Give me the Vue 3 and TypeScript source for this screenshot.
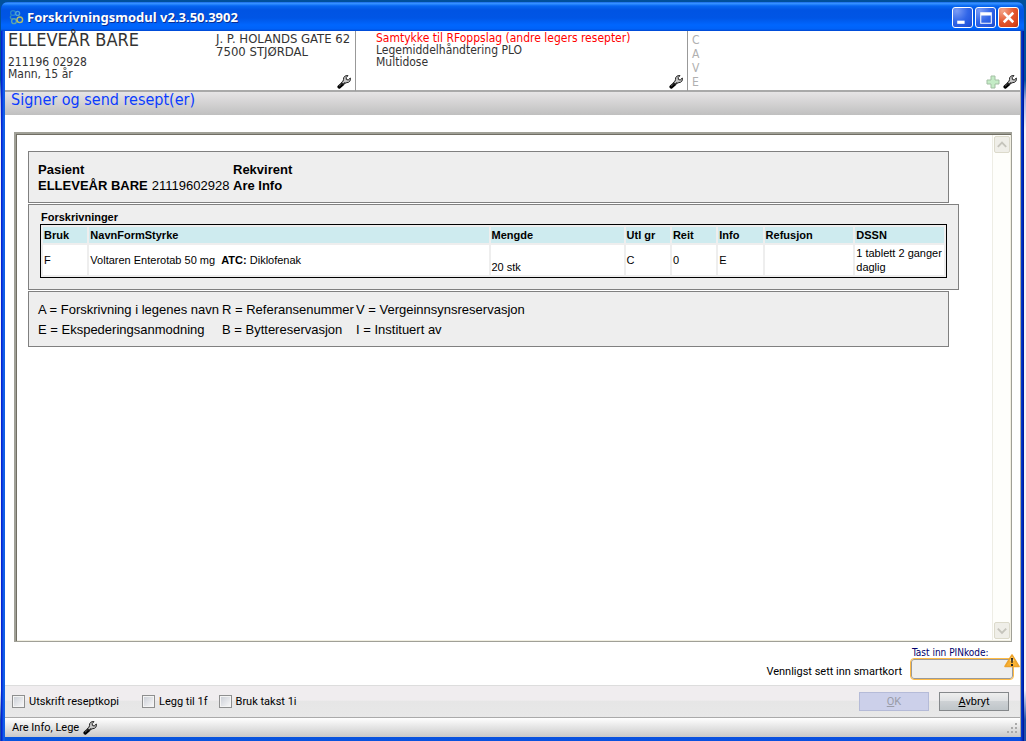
<script setup lang="ts">
import { ref } from 'vue'

interface Prescription {
  use: string
  name: string
  atc: string
  amount: string
  group: string
  repeats: string
  info: string
  refund: string
  dosage: string
}

const columns = ['Bruk', 'NavnFormStyrke', 'Mengde', 'Utl gr', 'Reit', 'Info', 'Refusjon', 'DSSN']

const prescriptions: Prescription[] = [
  {
    use: 'F',
    name: 'Voltaren Enterotab 50 mg',
    atc: 'Diklofenak',
    amount: '20 stk',
    group: 'C',
    repeats: '0',
    info: 'E',
    refund: '',
    dosage: '1 tablett 2 ganger daglig',
  },
]

const legend = [
  ['A = Forskrivning i legenes navn', 'R = Referansenummer', 'V = Vergeinnsynsreservasjon'],
  ['E = Ekspederingsanmodning', 'B = Byttereservasjon', 'I = Instituert av'],
]

const cave = ['C', 'A', 'V', 'E']

const printCopy = ref(false)
const add1f = ref(false)
const useRate1i = ref(false)
const pin = ref('')
</script>

<template>
  <div class="desktop">
    <svg class="defs" width="0" height="0" aria-hidden="true">
      <symbol id="wrench" viewBox="0 0 14 14">
        <path d="M2.2 11.8 5.6 8.8" stroke="#000" stroke-width="3.6" stroke-linecap="round" />
        <path d="M5 9 9 5.2" stroke="#222" stroke-width="3.4" />
        <path d="M11 .6C8.2.2 6.2 1.9 6.5 4.4L6 6.2 8 8.2 9.9 7.6C12.3 7.7 13.9 5.7 13.3 3L11.2 5 9.4 4.4 9.2 2.6Z" fill="#c4c4c4" stroke="#222" stroke-width="1" />
        <path d="M5.6 8 8.6 5.2" stroke="#ccc" stroke-width="1.4" />
        <path d="M2 11.2 4.6 9" stroke="#777" stroke-width="0.8" />
      </symbol>
    </svg>

    <div class="window">
      <header class="titlebar">
        <svg class="app-icon" viewBox="0 0 16 16" fill="none" stroke-width="1.4" aria-hidden="true">
          <circle cx="5" cy="4" r="2.4" stroke="#2a86c8" />
          <circle cx="9.6" cy="4.4" r="2" stroke="#4aa0d8" />
          <path d="M3 6.6C1.4 8.6 3 10.4 5 10" stroke="#3c90b8" />
          <circle cx="6" cy="12.2" r="2.4" stroke="#5aa3ae" />
          <circle cx="11.8" cy="10.8" r="2.8" stroke="#b0bf6b" />
        </svg>
        <h1>Forskrivningsmodul v2.3.50.3902</h1>
        <div class="window-buttons">
          <button type="button" aria-label="Minimer">
            <svg viewBox="0 0 18 18"><rect x="4" y="12" width="7" height="3" fill="#fff" /></svg>
          </button>
          <button type="button" aria-label="Maksimer">
            <svg viewBox="0 0 18 18"><path d="M4 4h11v11H4zM5 7v7h9V7z" fill="#fff" fill-rule="evenodd" /></svg>
          </button>
          <button type="button" class="close" aria-label="Lukk">
            <svg viewBox="0 0 18 18"><path d="M4.5 4.5 13.5 13.5M13.5 4.5 4.5 13.5" stroke="#fff" stroke-width="2.4" /></svg>
          </button>
        </div>
      </header>

      <div class="client">
        <section class="summary">
          <div class="cell patient">
            <div class="identity">
              <h2>ELLEVEÅR BARE</h2>
              <p>211196 02928</p>
              <p>Mann, 15 år</p>
            </div>
            <address>J. P. HOLANDS GATE 62<br />7500 STJØRDAL</address>
            <button type="button" class="tool" aria-label="Rediger pasient"><svg><use href="#wrench" /></svg></button>
          </div>
          <div class="cell consent">
            <div>
              <p class="alert">Samtykke til RFoppslag (andre legers resepter)</p>
              <p>Legemiddelhåndtering PLO</p>
              <p>Multidose</p>
            </div>
            <button type="button" class="tool" aria-label="Rediger samtykke"><svg><use href="#wrench" /></svg></button>
          </div>
          <div class="cell cave">
            <div class="cave-letters"><span v-for="letter in cave" :key="letter">{{ letter }}</span></div>
            <button type="button" class="tool" aria-label="Legg til CAVE">
              <svg viewBox="0 0 14 14"><path d="M5 1h4v4h4v4H9v4H5V9H1V5h4z" fill="#c4ecc6" stroke="#a3bfa3" /></svg>
            </button>
            <button type="button" class="tool" aria-label="Rediger CAVE"><svg><use href="#wrench" /></svg></button>
          </div>
        </section>

        <h2 class="heading">Signer og send resept(er)</h2>

        <main class="work">
          <div class="viewer">
            <div class="document">
              <section class="box people">
                <div class="person">
                  <b>Pasient</b>
                  <div class="person-line"><b>ELLEVEÅR BARE</b><span>21119602928</span></div>
                </div>
                <div class="person">
                  <b>Rekvirent</b>
                  <b>Are Info</b>
                </div>
              </section>

              <section class="box orders">
                <h3 id="orders-title">Forskrivninger</h3>
                <table aria-labelledby="orders-title">
                  <colgroup>
                    <col class="w5" /><col class="w45" /><col class="w15" /><col class="w5" />
                    <col class="w5" /><col class="w5" /><col class="w10" /><col class="w10" />
                  </colgroup>
                  <thead>
                    <tr><th v-for="column in columns" :key="column" scope="col">{{ column }}</th></tr>
                  </thead>
                  <tbody>
                    <tr v-for="item in prescriptions" :key="item.name">
                      <td>{{ item.use }}</td>
                      <td>{{ item.name }}&nbsp; <b>ATC:</b> {{ item.atc }}</td>
                      <td class="low">{{ item.amount }}</td>
                      <td>{{ item.group }}</td>
                      <td>{{ item.repeats }}</td>
                      <td>{{ item.info }}</td>
                      <td>{{ item.refund }}</td>
                      <td>{{ item.dosage }}</td>
                    </tr>
                  </tbody>
                </table>
              </section>

              <section class="box legend">
                <template v-for="row in legend" :key="row[0]">
                  <span v-for="entry in row" :key="entry">{{ entry }}</span>
                </template>
              </section>
            </div>
            <div class="scrollbar">
              <button type="button" aria-label="Rull opp">
                <svg viewBox="0 0 15 15"><path d="M3 10 7.5 5.5 12 10" /></svg>
              </button>
              <button type="button" aria-label="Rull ned">
                <svg viewBox="0 0 15 15"><path d="M3 5.5 7.5 10 12 5.5" /></svg>
              </button>
            </div>
          </div>

          <div class="pin-row">
            <span class="pin-hint">Vennligst sett inn smartkort</span>
            <div class="pin-field">
              <label for="pin">Tast inn PINkode:</label>
              <div class="pin-frame">
                <input id="pin" v-model="pin" type="password" disabled />
                <svg class="warning" viewBox="0 0 16 14" role="img" aria-label="Advarsel">
                  <path d="M8 1 15 12.5H1Z" fill="#f9b233" stroke="#eda32c" stroke-width="1.6" stroke-linejoin="round" />
                  <path d="M8 2.5 10.5 7H5.5Z" fill="#ffd782" />
                  <path d="M7 4h2l-.4 5H7.4zM7 10h2v2H7z" fill="#222" />
                </svg>
              </div>
            </div>
          </div>
        </main>

        <div class="actions">
          <label class="check copy"><input v-model="printCopy" type="checkbox" />Utskrift reseptkopi</label>
          <label class="check"><input v-model="add1f" type="checkbox" />Legg til 1f</label>
          <label class="check"><input v-model="useRate1i" type="checkbox" />Bruk takst 1i</label>
          <button type="button" class="btn ok" disabled><u>O</u>K</button>
          <button type="button" class="btn"><u>A</u>vbryt</button>
        </div>

        <footer class="status">
          <span>Are Info, Lege</span>
          <button type="button" class="tool" aria-label="Innstillinger"><svg><use href="#wrench" /></svg></button>
          <svg class="grip" viewBox="0 0 12 12" fill="#aaa" aria-hidden="true">
            <path d="M9 1h2v2H9zM5 5h2v2H5zM9 5h2v2H9zM1 9h2v2H1zM5 9h2v2H5zM9 9h2v2H9z" />
          </svg>
        </footer>
      </div>
    </div>
  </div>
</template>

<style>
body {
  margin: 0;
}
</style>

<style scoped>
* {
  box-sizing: border-box;
}
h1, h2, h3, p {
  margin: 0;
  font-weight: normal;
}
button {
  padding: 0;
  border: 0;
  background: none;
  font: inherit;
}
svg {
  display: block;
}
.defs {
  position: absolute;
}
.desktop {
  display: flex;
  min-height: 100vh;
  padding: 2px 2px 0 1px;
  background: linear-gradient(#00509c 0, #00509c 80px, #a9b4e4 100px, #f3f4fb 130px, #f3f4fb 690px, #1c50a8 720px);
  font-family: Roboto, "DejaVu Sans Condensed", sans-serif;
  font-size: 11px;
  color: #000;
}
.window {
  display: flex;
  flex: 1;
  flex-direction: column;
  border-radius: 7px 7px 0 0;
  background: linear-gradient(90deg, #0019cf 0, #0831d9 1px, #166aee 3px, #0855dd 4px, #0a4fe0 calc(100% - 4px), #0030c8 calc(100% - 2px), #00138c 100%);
  overflow: hidden;
}
.titlebar {
  display: flex;
  align-items: center;
  height: 29px;
  padding: 1px 5px 0 7px;
  background: linear-gradient(#0a5ce0 0, #3d95ff 1px, #2b8aff 2px, #0666f0 4px, #0054e3 8px, #0055e5 16px, #0066fe 23px, #0062f8 27px, #0046d0 29px);
}
.app-icon {
  width: 16px;
  height: 16px;
}
h1 {
  flex: 1;
  margin-left: 3px;
  font-family: "Noto Sans", "DejaVu Sans Condensed", sans-serif;
  font-size: 13px;
  font-weight: bold;
  line-height: 20px;
  color: #fff;
  text-shadow: 1px 1px 0 #0a2f94;
}
.window-buttons {
  display: flex;
  gap: 2px;
}
.window-buttons button {
  width: 21px;
  height: 21px;
  border: 1px solid #fff;
  border-radius: 3px;
  background: radial-gradient(circle at 20% 15%, #7b9cf5, #3166e8 50%, #2355dc 80%, #1d47c0);
}
.window-buttons svg {
  width: 19px;
  height: 19px;
}
.window-buttons .close {
  background: radial-gradient(circle at 20% 15%, #f3a58a, #e4572e 50%, #d8451c 80%, #b8320c);
}
.client {
  display: flex;
  flex: 1;
  flex-direction: column;
  margin: 0 3px 4px 4px;
  border-right: 1px solid #aca899;
  background: #fff;
}
.summary {
  display: grid;
  grid-template-columns: 350px 332px 1fr;
  height: 61px;
  border-bottom: 2px solid #a9a9a9;
  font-family: "DejaVu Sans Condensed", "DejaVu Sans", sans-serif;
  font-size: 12px;
  line-height: 12px;
  color: #333;
}
.cell {
  display: flex;
  align-items: flex-end;
  padding: 1px 2px 2px;
}
.cell + .cell {
  border-left: 1px solid #999;
}
.cell > :first-child {
  flex: 1;
  align-self: flex-start;
}
.patient {
  position: relative;
  padding-left: 3px;
}
.identity h2 {
  margin-bottom: 9px;
  font-size: 18px;
  line-height: 15px;
}
.patient address {
  width: 137px;
  align-self: flex-start;
  font-size: 13px;
  font-style: normal;
  line-height: 13px;
  white-space: nowrap;
}
.patient .tool {
  position: absolute;
  right: 4px;
  bottom: 2px;
}
.consent {
  padding-left: 20px;
  padding-right: 4px;
}
.alert {
  color: #f00;
}
.cave {
  gap: 3px;
  padding: 2px 3px 2px 4px;
}
.cave-letters {
  display: flex;
  flex-direction: column;
  line-height: 14px;
  color: #b0b0b0;
}
.tool, .tool svg {
  width: 14px;
  height: 14px;
}
.heading {
  height: 23px;
  padding-left: 6px;
  background: linear-gradient(#e6e4e5, #c0c0c0);
  font-family: "DejaVu Sans Condensed", "DejaVu Sans", sans-serif;
  font-size: 16px;
  line-height: 16px;
  color: #0a3cff;
}
.work {
  display: flex;
  flex: 1;
  flex-direction: column;
  padding: 17px 8px 6px 9px;
}
.viewer {
  display: flex;
  flex: 1;
  padding: 1px;
  border: 2px solid #a0a097;
  border-width: 2px 1px 1px 2px;
  box-shadow: inset 1px 1px 0 #716f64, inset -1px -1px 0 #f1efe2;
}
.document {
  flex: 1;
  padding: 16px 33px 0 11px;
  font-family: "Liberation Sans", Arial, sans-serif;
}
.box {
  margin-right: 10px;
  border: 1px solid #808080;
  background: #eee;
}
.people {
  display: flex;
  height: 52px;
  padding: 10px 9px;
  font-size: 13px;
  line-height: 16px;
}
.person {
  display: flex;
  flex-direction: column;
}
.person:first-child {
  width: 195px;
}
.person-line {
  display: flex;
  gap: 4px;
  white-space: nowrap;
}
.orders {
  margin: 1px 0;
  padding: 6px 11px 11px;
}
.orders h3 {
  padding-left: 1px;
  font-size: 11px;
  font-weight: bold;
  line-height: 13px;
}
.orders table {
  width: 100%;
  border: 1px solid #000;
  border-spacing: 2px;
  table-layout: fixed;
  font-size: 11px;
  line-height: 14px;
}
.w5 { width: 5%; }
.w10 { width: 10%; }
.w15 { width: 15%; }
.w45 { width: 45%; }
th, td {
  padding: 1px;
  text-align: left;
}
th {
  background: #ceebef;
}
td {
  background: #fff;
}
.low {
  vertical-align: bottom;
}
.legend {
  display: grid;
  grid-template-columns: 184px 134px 1fr;
  height: 56px;
  padding: 8px 9px;
  font-size: 13px;
  line-height: 20px;
  white-space: nowrap;
}
.scrollbar {
  display: flex;
  flex-direction: column;
  justify-content: space-between;
  width: 18px;
  padding: 1px;
  border-left: 1px solid #eeede5;
  background: #fefefb;
}
.scrollbar button {
  width: 16px;
  height: 17px;
  border: 1px solid #dcdacb;
  border-radius: 2px;
  background: #efeee8;
}
.scrollbar svg {
  width: 14px;
  height: 15px;
  fill: none;
  stroke: #c5c4bc;
  stroke-width: 2;
}
.pin-row {
  display: flex;
  justify-content: flex-end;
  gap: 9px;
  margin-top: 5px;
}
.pin-hint {
  margin-top: 18px;
  line-height: 14px;
}
.pin-field {
  width: 102px;
  margin-right: -1px;
}
.pin-field label {
  display: block;
  padding-left: 1px;
  font-family: "DejaVu Sans Condensed", sans-serif;
  font-size: 10px;
  line-height: 12px;
  white-space: nowrap;
  color: #00006c;
}
.pin-frame {
  position: relative;
}
.pin-frame input {
  display: block;
  width: 100%;
  height: 20px;
  border: 1px solid #999;
  border-radius: 3px;
  outline: 1px solid #fb4;
  outline-offset: 0;
  background: #eee;
}
.warning {
  position: absolute;
  top: -5px;
  right: -7px;
  width: 16px;
  height: 14px;
}
.actions {
  display: flex;
  align-items: center;
  height: 33px;
  padding: 0 11px 0 7px;
  border-top: 1px solid #ddd;
  border-bottom: 1px solid #aaa;
  background: linear-gradient(#f0edef 0, #f0edef 45%, #e6e6e6 50%, #e8e8e8);
}
.check {
  display: flex;
  align-items: center;
  gap: 4px;
  margin-right: 11px;
}
.check.copy {
  width: 119px;
}
.check input {
  width: 13px;
  height: 13px;
  margin: 0;
  border: 1px solid #8e8f8f;
  background: linear-gradient(135deg, #c8ccd4, #fafafa);
  box-shadow: inset 0 0 0 1px #f4f4f4;
  appearance: none;
}
.btn {
  width: 70px;
  height: 19px;
  margin-left: 10px;
  border: 1px solid #85888b;
  background: linear-gradient(#eee 0, #dfe1e3 45%, #cdd1d4 50%, #bfc5c9);
  line-height: 17px;
}
.btn.ok {
  margin-left: auto;
  border-color: #b5bbd8;
  background: #ccd0ea;
  color: #9a9ca8;
}
.status {
  display: flex;
  align-items: center;
  gap: 4px;
  height: 19px;
  padding: 0 2px 0 7px;
  background: linear-gradient(#fff, #c9c9c9);
}
.grip {
  width: 12px;
  height: 12px;
  margin-left: auto;
}
</style>
